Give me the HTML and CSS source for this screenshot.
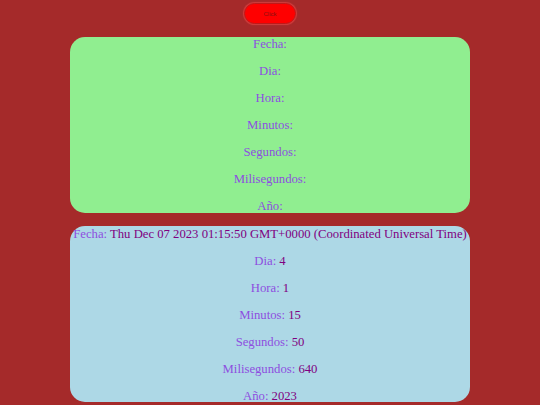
FILE: index.html
```html
<!DOCTYPE html>
<html>
<head>
<meta charset="utf-8">
<link rel="stylesheet" href="styles.css">
</head>
<body>
<div class="top"><button class="btn">Click</button></div>
<div class="card green">
  <div class="row"><span class="lbl">Fecha:</span></div>
  <div class="row"><span class="lbl">Dia:</span></div>
  <div class="row"><span class="lbl">Hora:</span></div>
  <div class="row"><span class="lbl">Minutos:</span></div>
  <div class="row"><span class="lbl">Segundos:</span></div>
  <div class="row"><span class="lbl">Milisegundos:</span></div>
  <div class="row"><span class="lbl">Año:</span></div>
</div>
<div class="card blue">
  <div class="row"><span class="lbl">Fecha:</span> <span class="val">Thu Dec 07 2023 01:15:50 GMT+0000 (Coordinated Universal Time)</span></div>
  <div class="row"><span class="lbl">Dia:</span> <span class="val">4</span></div>
  <div class="row"><span class="lbl">Hora:</span> <span class="val">1</span></div>
  <div class="row"><span class="lbl">Minutos:</span> <span class="val">15</span></div>
  <div class="row"><span class="lbl">Segundos:</span> <span class="val">50</span></div>
  <div class="row"><span class="lbl">Milisegundos:</span> <span class="val">640</span></div>
  <div class="row"><span class="lbl">Año:</span> <span class="val">2023</span></div>
</div>
</body>
</html>
```
FILE: styles.css
```css
html, body {
  margin: 0;
  padding: 0;
  background: #a52a2a;
  font-family: "Liberation Serif", "Times New Roman", serif;
  font-size: 12.7px;
}
body {
  padding: 3px 70px 0;
}
.top {
  display: flex;
  justify-content: center;
  height: 21px;
}
.btn {
  width: 52px;
  height: 21px;
  background: #ff0000;
  border: 1px solid #c01818;
  border-radius: 11px;
  color: #8b1010;
  font-family: "Liberation Sans", Arial, sans-serif;
  font-size: 6px;
  padding: 0;
  box-shadow: 0 0 1px 1px rgba(255,80,80,0.5);
}
.card {
  margin-top: 13px;
  height: 176px;
  border-radius: 15px;
  display: grid;
  grid-template-rows: repeat(7, 27px);
  justify-items: center;
  align-content: start;
  box-sizing: border-box;
  padding-top: 0;
}
.blue { padding-top: 1px; }
.green { background: #90ee90; }
.blue { background: #add8e6; }
.row {
  line-height: 15px;
  white-space: nowrap;
}
.lbl { color: #8d4ee0; }
.val { color: #800080; }
```
